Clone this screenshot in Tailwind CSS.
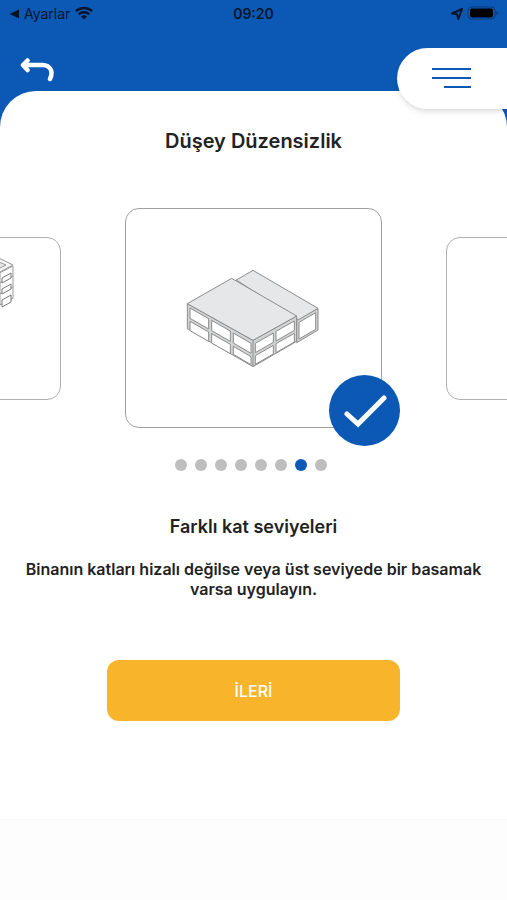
<!DOCTYPE html>
<html lang="tr">
<head>
  <meta charset="UTF-8" />
  <meta name="viewport" content="width=device-width, initial-scale=1.0" />
  <title>Düşey Düzensizlik</title>
  <script src="https://cdn.jsdelivr.net/npm/@tailwindcss/browser@4"></script>
</head>

<body class="min-h-screen flex flex-col bg-[#0b59b5] font-['Inter','Liberation_Sans',sans-serif] text-[#222222]">

  <!-- Status bar -->
  <div class="grid grid-cols-3 items-center h-7 px-2 text-sm leading-5 text-[#06152b]">
    <div class="flex items-center gap-1">
      <svg class="w-3 h-3" viewBox="0 0 12 12" fill="currentColor"><path d="M1.5 6 11 1.5v9z" /></svg>
      <span>Ayarlar</span>
      <svg class="w-5 h-4" viewBox="0 0 20 16" fill="none" stroke="currentColor" stroke-width="2.5">
        <path d="M1.8 5.200a12 12 0 0 1 16.400 0M4.800 8.300a7.600 7.600 0 0 1 10.400 0" />
        <path d="M10 13.600 7 10.600a4.300 4.300 0 0 1 6 0z" fill="currentColor" stroke="none" />
      </svg>
    </div>
    <span class="text-center font-semibold">09:20</span>
    <div class="flex items-center justify-end gap-1">
      <svg class="w-3 h-3" viewBox="0 0 12 12" fill="none" stroke="currentColor" stroke-width="2" stroke-linejoin="round"><path d="M11 1 7.3 11 6 6.2 1 5.5z" /></svg>
      <svg class="w-8 h-4" viewBox="0 0 32 16">
        <rect x="1" y="1" width="27" height="12" rx="3.5" fill="none" stroke="currentColor" stroke-opacity=".45" />
        <rect x="3" y="2.5" width="23" height="9" rx="2" fill="#000" />
        <path d="M29.5 5v4q1.5-.6 1.5-2t-1.5-2" fill="currentColor" fill-opacity=".5" />
      </svg>
    </div>
  </div>

  <!-- Header -->
  <header class="relative flex h-[63px] items-center px-5">
    <button type="button" aria-label="Geri" class="mt-5">
      <svg class="w-9 h-7" viewBox="0 0 36 28" fill="none" stroke="#fff" stroke-width="4.5" stroke-linecap="round" stroke-linejoin="round">
        <path d="M4 9h18c6 0 9.5 3.5 9.5 8 0 2-.5 4-1.500 6M7.500 4.500 3 9l4.500 5" />
      </svg>
    </button>
    <button type="button" aria-label="Menü" class="absolute right-0 top-5 z-10 flex h-[61px] w-[110px] items-center justify-center rounded-l-full bg-white shadow-md">
      <svg class="w-10 h-6" viewBox="0 0 40 24" fill="none" stroke="#0b59b5" stroke-width="2">
        <path d="M0 2h39M0 11h39M12 20h27" />
      </svg>
    </button>
  </header>

  <!-- Sheet -->
  <main class="flex grow flex-col items-center rounded-t-[36px] bg-white pt-9">
    <h1 class="text-xl leading-7 font-semibold">Düşey Düzensizlik</h1>

    <!-- Carousel -->
    <div class="mt-[53px] flex w-full items-center justify-center gap-16 overflow-x-clip">
      <button type="button" aria-label="Önceki" class="flex h-[163px] w-[190px] shrink-0 items-center justify-center rounded-[14px] border border-[#b0b0b0] bg-white pb-16">
        <svg class="w-24 h-20" viewBox="0 0 96 80" fill="#fff" stroke="#999" stroke-width="1" stroke-linejoin="round">
          <path d="M1 22v30l47 25 47-25V20L48 44z" />
          <path d="M1 20 48-4l47 23-47 25z" fill="#f4f4f4" />
          <path d="m14 20 34-18 40 17-40 20z" fill="#e6e7e8" />
          <path d="M48 44v33M48 55l47-25M48 66l47-25M64 35v33M82 26v33" />
          <path d="m66 42 12-6v5l-12 6zM84 32l9-5v5l-9 5zM66 53l12-6v5l-12 6zM84 43l9-5v5l-9 5zM66 64l12-6v5l-12 6zM84 54l9-5v7l-9 5z" stroke="#777" />
        </svg>
      </button>

      <div class="relative shrink-0">
        <button type="button" aria-label="Farklı kat seviyeleri" class="flex h-[220px] w-[257px] items-center justify-center rounded-[14px] border border-[#a0a0a0] bg-white">
          <!-- Stepped building -->
          <svg class="w-[170px] h-[125px]" viewBox="0 0 510 375" fill="#fff" stroke="#8c8c8c" stroke-width="3" stroke-linejoin="round">
            <path d="M383 190v70l64-38v-64z" fill="#d2d3d4" />
            <path d="m202 72 50-29 195 114-60 35z" fill="#e6e7e8" />
            <path d="m390 199 50-29v50l-50 29z" />
            <path d="M55 143v75l197 114 131-76v-76l-131 73z" fill="#d2d3d4" />
            <path d="M55 143 188 67l195 113-131 73z" fill="#e6e7e8" />
            <path d="M252 253v79" />
            <path d="m63 156 56 32v31l-56-32zM128 193l56 32v31l-56-32zM193 231l53 31v30l-53-31z" />
            <path d="m63 196 56 32v28l-56-32zM128 233l56 32v28l-56-32zM193 271l53 31v24l-53-31z" />
            <path d="m259 262 54-31v28l-54 31zM321 226l55-31v28l-55 32z" />
            <path d="m259 299 54-31v26l-54 31zM321 263l55-31v26l-55 32z" />
          </svg>
        </button>
        <span class="absolute -right-[18px] -bottom-[18px] flex h-[71px] w-[71px] items-center justify-center rounded-full bg-[#0b59b5]">
          <svg class="w-11 h-9" viewBox="0 0 44 36" fill="none" stroke="#fff" stroke-width="5" stroke-linecap="round">
            <path d="m4 21 11 10L41 5" />
          </svg>
        </span>
      </div>

      <button type="button" aria-label="Sonraki" class="h-[163px] w-[190px] shrink-0 rounded-[14px] border border-[#b0b0b0] bg-white"></button>
    </div>

    <!-- Page dots -->
    <div class="mt-[31px] flex gap-2 pr-1.5">
      <button type="button" aria-label="1" class="h-3 w-3 rounded-full bg-[#bebebe]"></button>
      <button type="button" aria-label="2" class="h-3 w-3 rounded-full bg-[#bebebe]"></button>
      <button type="button" aria-label="3" class="h-3 w-3 rounded-full bg-[#bebebe]"></button>
      <button type="button" aria-label="4" class="h-3 w-3 rounded-full bg-[#bebebe]"></button>
      <button type="button" aria-label="5" class="h-3 w-3 rounded-full bg-[#bebebe]"></button>
      <button type="button" aria-label="6" class="h-3 w-3 rounded-full bg-[#bebebe]"></button>
      <button type="button" aria-label="7" aria-current="true" class="h-3 w-3 rounded-full bg-[#0b59b5]"></button>
      <button type="button" aria-label="8" class="h-3 w-3 rounded-full bg-[#bebebe]"></button>
    </div>

    <h2 class="mt-11 text-lg leading-6 font-semibold">Farklı kat seviyeleri</h2>
    <p class="mt-5 px-5 text-center text-base leading-5 font-semibold">Binanın katları hizalı değilse veya üst seviyede bir basamak varsa uygulayın.</p>

    <button type="button" class="mt-[61px] h-[61px] w-[293px] rounded-xl bg-[#f8b52b] text-base font-medium text-white">İLERİ</button>

    <div class="mt-[98px] w-full grow border-t border-[#f6f6f6] bg-[#fdfdfd]"></div>
  </main>

</body>
</html>
